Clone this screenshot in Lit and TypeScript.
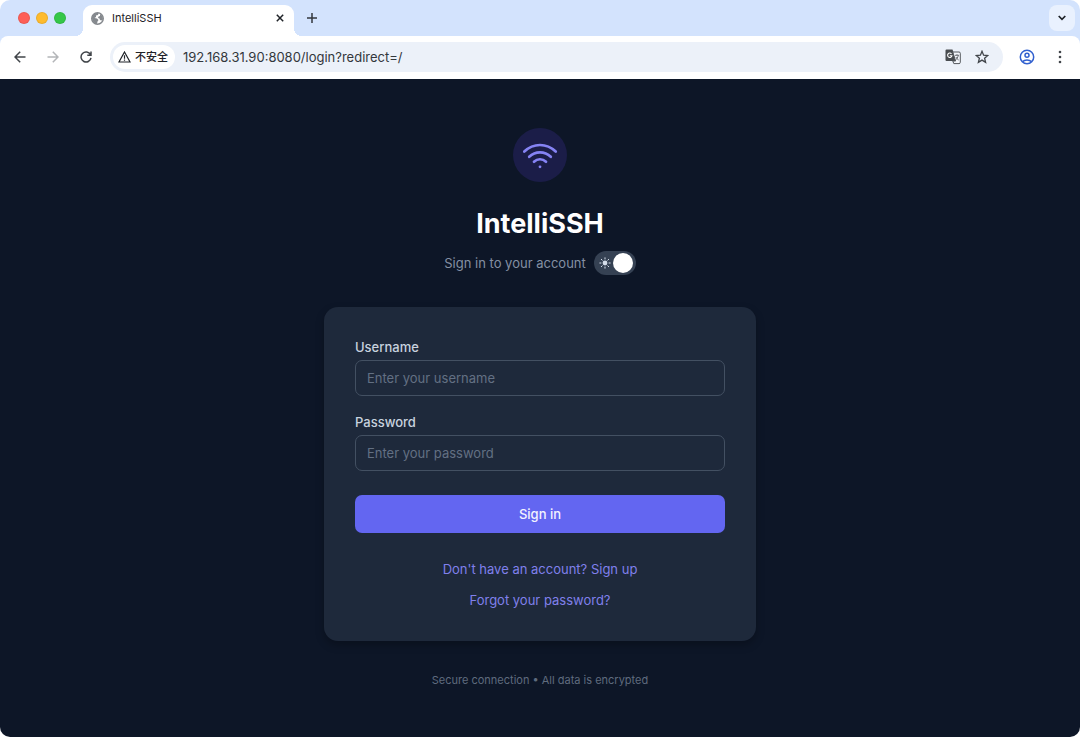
import { LitElement, html, css } from "lit";
import { customElement } from "lit/decorators.js";

@customElement("browser-chrome")
class BrowserChrome extends LitElement {
  static styles = css`
    :host {
      display: block;
      background: #d3e3fd;
      font-family: Inter, "Noto Sans CJK SC", sans-serif;
      color: #1f2328;
    }
    button {
      display: flex;
      align-items: center;
      justify-content: center;
      border: 0;
      padding: 0;
      background: none;
      color: #41454a;
    }
    svg {
      display: block;
      flex: none;
    }
    .strip {
      display: flex;
      align-items: flex-end;
      height: 36px;
      padding-right: 5px;
    }
    .lights {
      display: flex;
      gap: 6px;
      align-self: center;
      padding: 0 17px 0 18px;
    }
    .light {
      width: 12px;
      height: 12px;
      box-sizing: border-box;
      border-radius: 50%;
      border: 1px solid rgb(0 0 0 / 8%);
    }
    .red {
      background: #fe5f57;
    }
    .amber {
      background: #febb2e;
    }
    .green {
      background: #35c748;
    }
    .tab {
      position: relative;
      display: flex;
      align-items: center;
      box-sizing: border-box;
      width: 211px;
      height: 31px;
      padding: 0 7px 5px 8px;
      border-radius: 9px 9px 0 0;
      background: #fff;
    }
    .tab::before,
    .tab::after {
      content: "";
      position: absolute;
      bottom: 0;
      width: 8px;
      height: 8px;
    }
    .tab::before {
      right: 100%;
      background: radial-gradient(circle at 0 0, transparent 8px, #fff 8px);
    }
    .tab::after {
      left: 100%;
      background: radial-gradient(circle at 100% 0, transparent 8px, #fff 8px);
    }
    .title {
      flex: 1;
      padding-left: 8px;
      font-size: 11px;
      line-height: 16px;
    }
    .small {
      width: 14px;
      height: 14px;
      color: #1f2328;
    }
    .add {
      width: 36px;
      height: 36px;
      color: #33373c;
    }
    .list {
      width: 26px;
      height: 26px;
      margin: 0 0 5px auto;
      border-radius: 8px;
      background: #e9f1fe;
      color: #1f2328;
    }
    .toolbar {
      display: flex;
      align-items: center;
      box-sizing: border-box;
      height: 43px;
      padding: 0 12px 2px 11px;
      border-radius: 8px 8px 0 0;
      background: #fff;
    }
    .nav {
      display: flex;
      gap: 16px;
      padding-right: 16px;
    }
    .nav button,
    .end button {
      width: 17px;
      height: 24px;
    }
    .nav .off {
      color: #b3b5b8;
    }
    .address {
      flex: 1;
      display: flex;
      align-items: center;
      min-width: 0;
      box-sizing: border-box;
      height: 30px;
      padding: 0 14px 0 3px;
      border-radius: 15px;
      background: #ecf1f9;
    }
    .chip {
      height: 24px;
      gap: 4px;
      padding: 0 7px 0 5px;
      border-radius: 12px;
      background: #fff;
      color: #1f2328;
      font: 500 11px/16px Inter, "Noto Sans CJK SC", sans-serif;
    }
    .url {
      flex: 1;
      min-width: 0;
      border: 0;
      outline: 0;
      padding: 0 0 0 8px;
      background: none;
      color: #33373c;
      font: 13px/20px Inter, sans-serif;
    }
    .tools {
      display: flex;
      gap: 14px;
    }
    .end {
      display: flex;
      gap: 16px;
      padding-left: 15px;
    }
  `;

  render() {
    return html`
      <div class="strip">
        <div class="lights">
          <span class="light red"></span><span class="light amber"></span><span class="light green"></span>
        </div>
        <div class="tab">
          <svg width="13" height="13" viewBox="0 0 26 26">
            <circle cx="13" cy="13" r="11.5" fill="#fff" stroke="#85898e" stroke-width="3" />
            <path d="M2 12C2 5 8 1 15 2l-1 4-4 1v3l-3 2 5 1 3 3-2 3-1 5C6 23 2 18 2 12Z" fill="#85898e" />
            <path d="m18 4 5 4 1 7-3 2-3-1-1-3-3-1 1-3 3-1V4Z" fill="#85898e" />
          </svg>
          <span class="title">IntelliSSH</span>
          <button class="small" aria-label="Close tab">
            <svg width="8" height="8" viewBox="0 0 8 8" fill="none" stroke="currentColor" stroke-width="1.5">
              <path d="m.8.8 6.4 6.4m0-6.4L.8 7.2" />
            </svg>
          </button>
        </div>
        <button class="add" aria-label="New tab">
          <svg width="10" height="10" viewBox="0 0 10 10" fill="none" stroke="currentColor" stroke-width="1.5">
            <path d="M5 0v10M0 5h10" />
          </svg>
        </button>
        <button class="list" aria-label="Search tabs">
          <svg width="8" height="6" viewBox="0 0 8 6" fill="none" stroke="currentColor" stroke-width="1.7">
            <path d="m.7 1 3.3 3.3L7.3 1" />
          </svg>
        </button>
      </div>
      <div class="toolbar">
        <div class="nav">
          <button aria-label="Back">
            <svg width="12" height="12" viewBox="0 0 12 12" fill="none" stroke="currentColor" stroke-width="1.5">
              <path d="M11.5 6H1.2M6.2.8 1 6l5.2 5.2" />
            </svg>
          </button>
          <button class="off" aria-label="Forward">
            <svg width="12" height="12" viewBox="0 0 12 12" fill="none" stroke="currentColor" stroke-width="1.5">
              <path d="M.5 6h10.3M5.8.8 11 6l-5.2 5.2" />
            </svg>
          </button>
          <button aria-label="Reload">
            <svg width="12" height="12" viewBox="0 0 12 12" fill="none" stroke="currentColor" stroke-width="1.5">
              <path d="M10.5 3.7A5 5 0 1 0 11 6.8M11 .5v3.7H7.3" />
            </svg>
          </button>
        </div>
        <div class="address">
          <button class="chip">
            <svg width="13" height="12" viewBox="0 0 13 12" fill="none" stroke="currentColor" stroke-width="1.2">
              <path d="M6.5 1 12 11H1ZM6.5 4.3v3.4M6.5 8.5v1.2" />
            </svg>
            不安全
          </button>
          <input class="url" aria-label="Address" value="192.168.31.90:8080/login?redirect=/" />
          <div class="tools">
            <button aria-label="Translate">
              <svg width="16" height="16" viewBox="0 0 16 16">
                <path d="M1.5.5h6l1.2 3.5 2.3 8H1.5a1 1 0 0 1-1-1v-9.500a1 1 0 0 1 1-1Z" fill="#484c50" />
                <path d="M7.8 3H14a1.3 1.3 0 0 1 1.3 1.3v9A1.3 1.3 0 0 1 14 14.600H8.8l-1-2.600h2.8Z" fill="#f3f6fb" stroke="#55595e" />
                <path d="M6.5 4.8A2.2 2.2 0 1 0 7 6.7H4.8" fill="none" stroke="#fff" stroke-width="1.1" />
                <path d="M10 6.3h4M12 5.2v1.1M13.3 6.500c-.5 2-1.5 3.5-2.5 4.3M11 8c.5 1.5 1.5 2.3 2.7 3" fill="none" stroke="#6b6f74" />
              </svg>
            </button>
            <button aria-label="Bookmark">
              <svg width="14" height="14" viewBox="0 0 14 14" fill="none" stroke="currentColor" stroke-width="1.3">
                <path d="m7 1.3 1.6 3.9 4.2.3-3.2 2.700 1 4.1L7 10.100l-3.6 2.200 1-4.100L1.200 5.500l4.200-.3Z" />
              </svg>
            </button>
          </div>
        </div>
        <div class="end">
          <button aria-label="Profile">
            <svg width="16" height="16" viewBox="0 0 16 16" fill="none" stroke="#3160cf" stroke-width="1.5">
              <circle cx="8" cy="8" r="6.7" />
              <circle cx="8" cy="6.3" r="2" />
              <path d="M3.5 12.600c2.300-2.300 6.700-2.300 9 0" />
            </svg>
          </button>
          <button aria-label="Menu">
            <svg width="4" height="14" viewBox="0 0 4 14" fill="currentColor">
              <circle cx="2" cy="2" r="1.3" />
              <circle cx="2" cy="7" r="1.3" />
              <circle cx="2" cy="12" r="1.3" />
            </svg>
          </button>
        </div>
      </div>
    `;
  }
}

@customElement("login-page")
class LoginPage extends LitElement {
  static styles = css`
    :host {
      display: flex;
      flex-direction: column;
      align-items: center;
      box-sizing: border-box;
      padding: 49px 24px 24px;
      background: #0d1627;
      font-family: Inter, sans-serif;
      font-size: 13px;
      line-height: 18px;
      color: #8490a3;
    }
    svg {
      display: block;
    }
    .badge {
      display: flex;
      align-items: center;
      justify-content: center;
      width: 54px;
      height: 54px;
      border-radius: 50%;
      background: #1b1d48;
    }
    h1 {
      margin: 26px 0 11px;
      color: #fff;
      font-size: 27px;
      line-height: 32px;
      font-weight: 700;
    }
    .intro {
      display: flex;
      align-items: center;
      gap: 8px;
    }
    .theme {
      display: flex;
      align-items: center;
      justify-content: space-between;
      box-sizing: border-box;
      width: 42px;
      height: 24px;
      padding: 0 3px 0 5px;
      border: 0;
      border-radius: 12px;
      background: #354153;
    }
    .knob {
      width: 20px;
      height: 20px;
      border-radius: 50%;
      background: #fff;
    }
    form {
      display: flex;
      flex-direction: column;
      box-sizing: border-box;
      width: 100%;
      max-width: 432px;
      margin-top: 32px;
      padding: 31px 31px 32px;
      border-radius: 14px;
      background: #1e293b;
      box-shadow: 0 4px 8px rgb(0 0 0 / 25%);
    }
    label {
      margin-bottom: 4px;
      color: #c8d2df;
      font-weight: 500;
    }
    .field {
      box-sizing: border-box;
      width: 100%;
      height: 36px;
      margin-bottom: 17px;
      padding: 0 11px;
      border: 1px solid #435062;
      border-radius: 7px;
      outline: 0;
      background: transparent;
      color: #f1f5f9;
      font: inherit;
    }
    .field::placeholder {
      color: #637083;
      opacity: 1;
    }
    .submit {
      height: 38px;
      margin: 7px 0 27px;
      border: 0;
      border-radius: 7px;
      background: #6366f1;
      color: #f3f3ff;
      font: inherit;
      font-weight: 500;
    }
    .links {
      display: flex;
      flex-direction: column;
      align-items: center;
      gap: 13px;
    }
    a {
      color: #8080ec;
      text-decoration: none;
    }
    .note {
      margin: 31px 0 0;
      color: #5f6b7e;
      font-size: 11px;
      line-height: 16px;
    }
  `;

  render() {
    return html`
      <div class="badge">
        <svg width="36" height="28" viewBox="0 0 36 28" fill="none" stroke="#8583f4" stroke-width="2.7" stroke-linecap="round">
          <path d="M2.3 10.5C11.500 1.800 24.500 1.800 33.700 10.5" />
          <path d="M7.2 15.800c6.200-5.800 15.400-5.800 21.600 0" />
          <path d="M12 20.800c3.500-3.400 8.500-3.400 12 0" />
          <circle cx="18" cy="25.800" r="1.4" fill="#8583f4" stroke="none" />
        </svg>
      </div>
      <h1>IntelliSSH</h1>
      <div class="intro">
        <span>Sign in to your account</span>
        <button class="theme" role="switch" aria-checked="true" aria-label="Dark theme">
          <svg width="12" height="12" viewBox="0 0 12 12" stroke="#d5deea" stroke-width="1" stroke-linecap="round">
            <circle cx="6" cy="6" r="2.4" fill="#d5deea" stroke="none" />
            <path d="M6 .8V2M6 10v1.200M.8 6H2M10 6h1.200M2.300 2.300l.9.9M8.800 8.800l.9.9M2.300 9.700l.9-.9M8.800 3.200l.9-.9" />
          </svg>
          <span class="knob"></span>
        </button>
      </div>
      <form @submit=${(e: Event) => e.preventDefault()}>
        <label for="username">Username</label>
        <input class="field" id="username" type="text" placeholder="Enter your username" />
        <label for="password">Password</label>
        <input class="field" id="password" type="password" placeholder="Enter your password" />
        <button class="submit" type="submit">Sign in</button>
        <div class="links">
          <a href="#signup">Don't have an account? Sign up</a>
          <a href="#forgot">Forgot your password?</a>
        </div>
      </form>
      <p class="note">Secure connection • All data is encrypted</p>
    `;
  }
}

@customElement("app-root")
class AppRoot extends LitElement {
  static styles = css`
    :host {
      display: flex;
      flex-direction: column;
      min-height: 100vh;
      overflow: hidden;
      border-radius: 10px;
    }
    login-page {
      flex: 1;
    }
  `;

  render() {
    return html`<browser-chrome></browser-chrome><login-page></login-page>`;
  }
}
